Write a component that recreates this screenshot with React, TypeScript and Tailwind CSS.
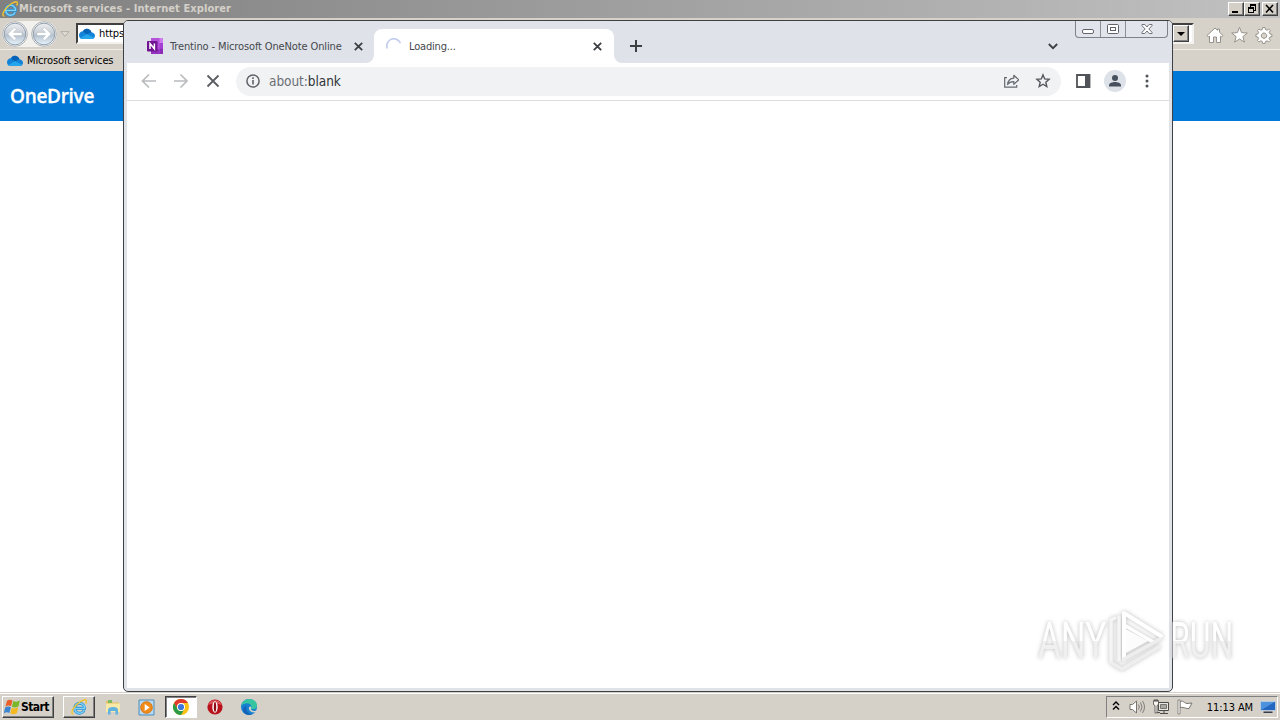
import type { ReactNode } from "react";

const ui = "font-['DejaVu_Sans_Condensed','DejaVu_Sans',sans-serif]";

function Cloud({ className }: { className?: string }) {
  return (
    <svg viewBox="0 0 16 11" className={className}>
      <path d="M4 3.200C5 .9 8 .1 10.200 1.400 11.600 2.200 12.200 3.300 12.500 4.300 14.600 4.500 16 6 16 7.700 16 9.600 14.600 11 12.800 11H3.500C1.500 11 0 9.500 0 7.200 0 5.100 1.700 3.300 4 3.200Z" fill="#1283d8" />
      <path d="M4 3.200C5 .9 8 .1 10.200 1.400 11.600 2.200 12.200 3.300 12.500 4.300L7.500 6.300Z" fill="#0762b5" />
      <path d="M1.200 10 8 6.300 15.300 9.800C14.700 10.600 13.800 11 12.800 11H3.500C2.600 11 1.800 10.600 1.200 10Z" fill="#25a5ec" />
    </svg>
  );
}

function IELogo({ className }: { className?: string }) {
  return (
    <svg viewBox="0 0 16 16" className={className} fill="none">
      <path d="M13.200 11.200A5 5 0 1 1 13.600 9.300H4.500" stroke="#2d93d6" strokeWidth="2.900" />
      <path d="M13.200 11.200A5 5 0 1 1 13.600 9.300H4.500" stroke="#7fd3f7" strokeWidth="1.300" />
      <path d="M2.300 15C-.3 15 .8 10.500 5 6.200 9.200 2 14 -.2 15.200 1.300 15.700 2 15.400 3.300 14.600 4.600" stroke="#f2c22c" strokeWidth="1.400" />
    </svg>
  );
}

function NavOrb({ flip }: { flip?: boolean }) {
  return (
    <svg viewBox="0 0 26 26" className={flip ? "h-[26px] w-[26px] -scale-x-100" : "h-[26px] w-[26px]"}>
      <defs>
        <linearGradient id="orb" x1="0" y1="0" x2="0" y2="1">
          <stop offset="0" stopColor="#eef0f2" />
          <stop offset=".45" stopColor="#c9cfd6" />
          <stop offset=".55" stopColor="#b4c1ce" />
          <stop offset="1" stopColor="#e8f4fc" />
        </linearGradient>
      </defs>
      <circle cx="13" cy="13" r="12.300" fill="#f8f9f9" stroke="#9b9ea2" strokeWidth=".8" />
      <circle cx="13" cy="13" r="10.800" fill="url(#orb)" stroke="#8796a6" strokeWidth=".9" />
      <path d="M12.300 6.500 5.800 13l6.500 6.500 2-2-2.800-2.900H20v-3.200h-8.500l2.800-2.900Z" fill="#fff" stroke="#a3aeb9" strokeWidth=".4" />
    </svg>
  );
}

function ClassicButton({ children }: { children: ReactNode }) {
  return (
    <div className="flex h-[14px] w-4 items-center justify-center border border-t-white border-r-[#404040] border-b-[#404040] border-l-white bg-[#d4d0c8] shadow-[inset_-1px_-1px_0_#808080]">
      {children}
    </div>
  );
}

function TitleBar() {
  return (
    <header className="flex h-[18px] shrink-0 items-center justify-between bg-linear-to-r from-[#808080] to-[#c1c1c1] pl-[2px] pr-[2px]">
      <div className="flex items-center">
        <IELogo className="h-4 w-4" />
        <span className="ml-[1px] whitespace-nowrap font-['DejaVu_Sans_Condensed','DejaVu_Sans',sans-serif] text-[11px] leading-[16px] font-bold tracking-[0.090px] text-[#d4d0c8]">
          Microsoft services - Internet Explorer
        </span>
      </div>
      <div className="flex">
        <ClassicButton>
          <svg viewBox="0 0 12 10" className="h-[10px] w-3"><path d="M2 7h6v2H2z" /></svg>
        </ClassicButton>
        <ClassicButton>
          <svg viewBox="0 0 12 10" className="h-[10px] w-3" fill="none" stroke="#000" shapeRendering="crispEdges">
            <path d="M4 .5h6M4 1.500h6M4.500 1v2.500M9.500 1v5.500M8 6h2M2 3.500h6M2 4.500h6M2.500 4v5M7.500 4v5M2 8.500h6" />
          </svg>
        </ClassicButton>
        <div className="w-[2px]" />
        <ClassicButton>
          <svg viewBox="0 0 12 10" className="h-[10px] w-3"><path d="m2 1 7 7.500M9 1 2 8.500" stroke="#000" strokeWidth="1.600" /></svg>
        </ClassicButton>
      </div>
    </header>
  );
}

function Navigation() {
  return (
    <div className="flex h-[31px] shrink-0 items-center bg-[#d6d1c9] pl-[2px]">
      <div className="flex h-[26px] items-center gap-[3px] rounded-full bg-[#f2f1ee]">
        <NavOrb />
        <NavOrb flip />
      </div>
      <svg viewBox="0 0 10 6" className="ml-[3px] h-[6px] w-[10px]"><path d="M.8.600h8.400L5 5.300Z" fill="#dedbd4" stroke="#b3afa7" /></svg>
      <div className="ml-[6px] flex h-[21px] w-[1118px] items-center border-2 border-t-[#404040] border-r-[#f4f2ee] border-b-[#f4f2ee] border-l-[#404040] bg-white pl-[1px]">
        <Cloud className="h-[11px] w-4" />
        <span className={`${ui} ml-[4px] text-[11px] leading-none tracking-[-0.1px] text-black`}>https</span>
        <span className="ml-auto mr-[3px] flex h-[17px] w-4 items-center justify-center border border-t-white border-r-[#404040] border-b-[#404040] border-l-white bg-[#d4d0c8] shadow-[inset_-1px_-1px_0_#808080]">
          <svg viewBox="0 0 8 4" className="h-[4px] w-[8px]"><path d="M0 0h8L4 4Z" /></svg>
        </span>
      </div>
      <svg viewBox="0 0 70 20" className="ml-[12px] mt-[2px] h-5 w-[70px]" fill="#fff" stroke="#96928b" strokeWidth="1" strokeLinejoin="round">
        <path d="M1 10.500 9 3l2.500 2.300V4h2v3.300l3.500 3.200L15.500 12l-1-.8V17.500h-4v-5.500H7.500v5.500h-4v-6.300l-1 .8Z" />
        <path d="m33.500 2.300 2.100 5.300 5.700.4-4.400 3.600 1.500 5.500-4.900-3.100-4.900 3.100 1.500-5.500L25.700 8l5.700-.4Z" />
        <path fillRule="evenodd" d="m57 2.500 2 .1.500 1.900 1.500.7 1.800-1.100 1.500 1.500-1.100 1.800.7 1.500 2 .5v2.200l-2 .5-.7 1.500 1.100 1.800-1.500 1.500-1.800-1.100-1.500.7-.5 2h-2.200l-.5-2-1.500-.7-1.800 1.100-1.500-1.500 1.100-1.800-.7-1.500-2-.5V9.400l2-.5.7-1.500-1.100-1.800 1.500-1.500 1.800 1.100 1.500-.7.5-2ZM58 8a2.700 2.700 0 1 0 .01 0Z" />
      </svg>
    </div>
  );
}

function WindowControls() {
  return (
    <div className="mr-px flex h-[17px] rounded-b-[4px] border border-t-0 border-[#7d828b] bg-[#e1e5eb]">
      <span className="flex w-[25px] items-center justify-center border-r border-[#8a8f98]">
        <svg viewBox="0 0 12 5" className="mt-[4px] h-[5px] w-3"><rect x=".5" y=".5" width="11" height="4" rx="1.500" fill="#fff" stroke="#60636b" /></svg>
      </span>
      <span className="flex w-[25px] items-center justify-center border-r border-[#8a8f98]">
        <svg viewBox="0 0 12 10" className="h-[10px] w-3" fill="#fff" stroke="#60636b"><rect x=".5" y=".5" width="11" height="9" rx="1" /><rect x="3.500" y="3.500" width="5" height="3" /></svg>
      </span>
      <span className="flex w-[41px] items-center justify-center">
        <svg viewBox="0 0 12 10" className="h-[10px] w-3"><path d="M1 .5h2.800L6 3 8.200.5H11v1.200L7.800 5 11 8.300v1.200H8.200L6 7 3.800 9.500H1V8.300L4.200 5 1 1.700Z" fill="#fff" stroke="#60636b" strokeWidth=".9" /></svg>
      </span>
    </div>
  );
}

function TabClose() {
  return <svg viewBox="0 0 9 9" className="h-[9px] w-[9px]"><path d="m.8.8 7.400 7.400M8.200.8.8 8.200" stroke="#3c4043" strokeWidth="1.800" /></svg>;
}

function TabStrip() {
  return (
    <div className="flex h-[42px] items-end">
      <div className="flex h-[34px] w-[239px] items-center pl-[20px]">
        <svg viewBox="0 0 16 16" className="h-4 w-4">
          <path d="M4 0h11.200q.8 0 .8.8V16H4Z" fill="#b552dc" />
          <path d="M12.500 0H16v5h-3.500Z" fill="#cf7bee" /><path d="M12.500 5H16v5.500h-3.500Z" fill="#a63ed4" /><path d="M12.500 10.500H16V16h-3.500Z" fill="#8f2bb9" />
          <path d="M4 11h8.500v5H4Z" fill="#9332bf" />
          <rect y="3" width="10.500" height="10.500" rx=".8" fill="#711491" />
          <path d="M3 11V5.500l4.400 5.300V5.500" fill="none" stroke="#fff" strokeWidth="1.500" />
        </svg>
        <span className={`${ui} ml-[7px] whitespace-nowrap text-[11px] leading-none tracking-[-0.130px] text-[#45484d]`}>Trentino - Microsoft OneNote Online</span>
        <span className="ml-auto mr-[3px]"><TabClose /></span>
      </div>
      <svg viewBox="0 0 8 8" className="h-2 w-2"><path d="M8 0v8H0a8 8 0 0 0 8-8Z" fill="#fff" /></svg>
      <div className="flex h-[34px] w-[240px] items-center rounded-t-[8px] bg-white pl-[12px] pr-[12px]">
        <svg viewBox="0 0 16 16" className="h-4 w-4"><path d="M1.300 10.500A7 7 0 0 1 14.400 5.200" fill="none" stroke="#c3cdf0" strokeWidth="1.700" /></svg>
        <span className={`${ui} ml-[7px] text-[11px] leading-none tracking-[-0.170px] text-[#45484d]`}>Loading...</span>
        <span className="ml-auto"><TabClose /></span>
      </div>
      <svg viewBox="0 0 8 8" className="h-2 w-2"><path d="M0 0v8h8a8 8 0 0 1-8-8Z" fill="#fff" /></svg>
      <svg viewBox="0 0 12 12" className="mb-[11px] ml-[8px] h-3 w-3"><path d="M6 0v12M0 6h12" stroke="#3c4043" strokeWidth="2" /></svg>
      <div className="ml-auto flex h-[42px]">
        <svg viewBox="0 0 10 7" className="mr-[17px] mt-[22px] h-[7px] w-[10px]"><path d="m.8 1 4.200 4.200L9.200 1" fill="none" stroke="#3c4043" strokeWidth="1.800" /></svg>
        <WindowControls />
      </div>
    </div>
  );
}

function AddressRow() {
  return (
    <div className="flex h-[38px] shrink-0 items-center border-b border-[#dadce0] bg-white pl-[13px]">
      <svg viewBox="0 0 80 16" className="mb-[2px] h-4 w-20" fill="none" strokeWidth="1.700">
        <path d="M16 8H3M9 1.500 2.500 8 9 14.500" stroke="#b9bbbe" />
        <path d="M34 8h13M40.500 1.500 47 8l-6.500 6.500" stroke="#b9bbbe" />
        <path d="m67.500 2.500 11 11M78.500 2.500l-11 11" stroke="#5a5d61" strokeWidth="1.800" />
      </svg>
      <div className="ml-[16px] flex h-[29px] w-[825px] items-center rounded-full bg-[#f0f2f4] pl-[10px] pr-[10px]">
        <svg viewBox="0 0 14 14" className="mb-px h-[14px] w-[14px]"><circle cx="7" cy="7" r="6.100" fill="none" stroke="#5f6368" strokeWidth="1.500" /><path d="M6.200 6h1.600v4.500H6.200zM6.200 3.300h1.600v1.600H6.200z" fill="#5f6368" /></svg>
        <span className="ml-[9px] font-['DejaVu_Sans_Condensed','DejaVu_Sans',sans-serif] text-[13.500px] leading-none tracking-[-0.050px] text-[#6a6e73]">about:<span className="text-[#303236]">blank</span></span>
        <svg viewBox="0 0 16 16" className="ml-auto mb-[2px] h-4 w-4" fill="none" stroke="#65696e" strokeWidth="1.200">
          <path d="M4 4.600H1.700v9.500h12V12" />
          <path d="M4.600 11.500C5 7.500 7 5.500 10.800 5.200V2.300L15.800 6.800l-5 4.500V8.700C8 8.600 6 9.500 4.600 11.500Z" strokeLinejoin="round" />
        </svg>
        <svg viewBox="0 0 16 16" className="ml-[16px] mb-px h-4 w-4"><path d="m8 1.900 1.700 4 4.400.4-3.300 2.900 1 4.300L8 11.200l-3.800 2.300 1-4.300L1.900 6.300l4.400-.4Z" fill="none" stroke="#53575b" strokeWidth="1.400" /></svg>
      </div>
      <svg viewBox="0 0 15 14" className="mb-[2px] ml-[15px] h-[14px] w-[15px]"><path d="M1 1h12.500v12H1z" fill="none" stroke="#505357" strokeWidth="1.800" /><path d="M9 1h5v12H9z" fill="#505357" /></svg>
      <svg viewBox="0 0 22 22" className="mb-[1px] ml-[13px] h-[22px] w-[22px]"><circle cx="11" cy="11" r="11" fill="#dde1e8" /><circle cx="11" cy="8" r="3" fill="#47515d" /><path d="M5 16.500v-1.300C5 13 8.500 12 11 12s6 1 6 3.200v1.300Z" fill="#47515d" /></svg>
      <svg viewBox="0 0 4 14" className="mb-px ml-[19px] h-[14px] w-1" fill="#505357"><circle cx="2" cy="2" r="1.500" /><circle cx="2" cy="7" r="1.500" /><circle cx="2" cy="12" r="1.500" /></svg>
    </div>
  );
}

function ChromeWindow() {
  return (
    <section className="absolute top-[20px] left-[123px] flex h-[672px] w-[1050px] flex-col rounded-[5px] border border-[#3e4045] bg-[#e0e3e8] px-[3px] pb-[3px]">
      <div className="-mx-[3px] overflow-hidden rounded-t-[4px] bg-[#dfe2e9] px-[3px]"><TabStrip /></div>
      <AddressRow />
      <main className="flex-1 bg-white" />
    </section>
  );
}

function Watermark() {
  return (
    <div className="absolute top-[607px] left-[1034px] flex h-[68px] w-[204px] items-center justify-between px-[4px] opacity-90 drop-shadow-[0_0_2px_#b4b4b4]">
      <div className="w-[64px]">
        <span className="inline-block origin-left scale-x-[.7] bg-linear-to-b from-[#fff] from-50% to-[#efefef] to-50% bg-clip-text font-['Roboto',sans-serif] text-[50px] leading-none font-normal whitespace-nowrap text-transparent">ANY</span>
      </div>
      <svg viewBox="0 0 58 62" className="absolute left-[73px] h-[62px] w-[58px]" fill="none" strokeLinejoin="round" strokeLinecap="round">
        <path d="M4 52V10l4-2M12 50V7" stroke="#f4f4f4" strokeWidth="3.500" />
        <path d="M17 49V3L54 26" stroke="#fff" strokeWidth="4" />
        <path d="M17 15 46 32" stroke="#fff" strokeWidth="3.500" />
        <path d="M17 49 53 29M5 53l10 6 37-22" stroke="#ededed" strokeWidth="3.500" />
        <path d="M19 19v24l22-12Z" fill="#fcfcfc" />
      </svg>
      <div className="w-[64px]">
        <span className="inline-block origin-left scale-x-[.64] bg-linear-to-b from-[#fff] from-50% to-[#efefef] to-50% bg-clip-text font-['Roboto',sans-serif] text-[50px] leading-none font-normal whitespace-nowrap text-transparent">RUN</span>
      </div>
    </div>
  );
}

function Taskbar() {
  return (
    <footer className="flex h-[28px] shrink-0 items-center border-t border-[#d4d0c8] bg-[#d5d1c9] pl-[2px] pr-[2px] shadow-[inset_0_1px_0_#fff]">
      <div className="mt-[1px] flex h-[22px] w-[52px] items-center border border-t-white border-r-[#404040] border-b-[#404040] border-l-white pl-[1px] shadow-[inset_-1px_-1px_0_#808080]">
        <svg viewBox="0 0 16 16" className="h-4 w-4">
          <path d="M3 1.800C5 .2 7 .6 8.500 1.600L7.100 7.300C5.400 6.300 3.400 6.300 1.400 7.700Z" fill="#e9602a" />
          <path d="M9.300 2c2 1.100 4.200 1 6.600-.4l-1.400 5.700c-2.200 1.500-4.500 1.600-6.600.5Z" fill="#79b829" />
          <path d="M1.200 8.500C3.200 7.200 5.200 7.200 6.900 8.200L5.400 14C3.700 12.800 1.700 12.900-.2 14.300Z" fill="#3b85d1" />
          <path d="M7.700 8.700c2 1.100 4.300 1 6.600-.4l-1.400 5.700c-2.200 1.500-4.500 1.500-6.600.4Z" fill="#f5b91f" />
        </svg>
        <span className="ml-px font-['DejaVu_Sans_Condensed','DejaVu_Sans',sans-serif] text-[12px] leading-none font-bold tracking-[-0.550px] text-black">Start</span>
      </div>
      <div className="mt-[1px] ml-[9px] flex h-[22px] w-[32px] items-center justify-center border border-t-white border-r-[#404040] border-b-[#404040] border-l-white shadow-[inset_-1px_-1px_0_#808080]">
        <IELogo className="h-4 w-4" />
      </div>
      <svg viewBox="0 0 16 16" className="mt-[1px] ml-[10px] h-4 w-4">
        <path d="M1 2h5l1.500 1.500H14V13H1Z" fill="#e5c15f" /><path d="M3 1h4v3H3z" fill="#7dbb60" /><path d="M1 4.500h14V13H1Z" fill="#f9e9a9" />
        <path d="M3 15.500V11Q3 8 8 8t5 3v4.500h-2.600V12H5.600v3.500Z" fill="#62b2df" />
      </svg>
      <svg viewBox="0 0 17 17" className="mt-[1px] ml-[17px] h-[17px] w-[17px]">
        <path d="M1 1h15v15H1z" fill="#b8d9f0" stroke="#4b8dbd" /><circle cx="8.500" cy="8.500" r="5.800" fill="#f18b19" stroke="#d67913" /><path d="M6.700 5v7l5-3.500Z" fill="#fff" />
      </svg>
      <div className="mt-[1px] ml-[10px] flex h-[22px] w-[32px] items-center justify-center border border-t-[#404040] border-r-white border-b-white border-l-[#404040] bg-white shadow-[inset_1px_1px_0_#808080]">
        <svg viewBox="0 0 16 16" className="h-4 w-4">
          <circle cx="8" cy="8" r="8" fill="#fbc116" /><path d="M1.070 4A8 8 0 0 1 14.930 4H8a4 4 0 0 0-3.460 6Z" fill="#df3a2d" />
          <path d="M1.070 4A8 8 0 0 0 8 16l3.460-6a4 4 0 0 1-6.920 0Z" fill="#2b9b4a" /><circle cx="8" cy="8" r="4" fill="#fff" /><circle cx="8" cy="8" r="3.100" fill="#3c78dc" />
        </svg>
      </div>
      <svg viewBox="0 0 16 16" className="mt-[1px] ml-[10px] h-4 w-4"><circle cx="8" cy="8" r="7.600" fill="#b8121c" /><path d="M1 6a7.500 7.500 0 0 1 14 0Q8 3 1 6Z" fill="#d95358" /><ellipse cx="8" cy="8" rx="2.700" ry="5.800" fill="#fff" /><ellipse cx="8" cy="8" rx="1.200" ry="4.900" fill="#8f0d16" /></svg>
      <svg viewBox="0 0 16 16" className="mt-[1px] ml-[18px] h-4 w-4">
        <circle cx="8" cy="8" r="8" fill="#1780d1" /><path d="M.3 6.500C1.500 2 5 0 8.500 0 13 0 16 3.300 16 6.500 16 9 14 10.300 12 10.300c-2.300 0-2.300-1-1.700-1.700C11 6 8.500 4.200 6 4.200c-2.300 0-4.500 1-5.700 2.300Z" fill="#36c5a1" />
        <path d="M5.500 7.500C4 11 7 15 11 15 8 17.300 3 15.500 2.200 11.500 1.800 9 3.500 7 5.500 7.500Z" fill="#1461b5" /><path d="M10.300 8.600C8.500 11 12.500 13 16 11.300L14.800 13C10.500 14.500 7 11.500 8 8.200 9 6.800 10.500 7.500 10.300 8.600Z" fill="#d5d1c9" />
      </svg>
      <div className="mt-[1px] ml-auto flex h-[22px] w-[172px] items-center border border-t-[#808080] border-r-white border-b-white border-l-[#808080] pl-[5px] pr-[1px]">
        <svg viewBox="0 0 8 10" className="mb-[3px] h-[10px] w-2" fill="none" stroke="#000" strokeWidth="1.400"><path d="m1 4 3-3 3 3M1 8.500l3-3 3 3" /></svg>
        <svg viewBox="0 0 16 16" className="ml-[9px] h-4 w-4" fill="none" stroke="#77756f"><path d="M1 5.500h2.500L7.500 2v12l-4-3.500H1Z" fill="#fff" /><path d="M9.500 5.500q1.700 2.500 0 5M11.500 3.500q3 4.500 0 9M13.500 2q4 6 0 12" strokeWidth=".9" /></svg>
        <svg viewBox="0 0 16 16" className="ml-[8px] h-4 w-4" stroke="#4d4c48"><path d="M5.500 3.500h10v8h-10z" fill="#e9e8e4" /><path d="M7.500 5.500h6v4h-6z" fill="#aaa8a2" stroke="#77756f" /><path d="M7 14.500h8M11 11.500v3" /><path d="M.5 1.500h5v4l-1.500 1v7h3l-5 .5v-7.500l-1.500-1Z" fill="#f7f6f3" strokeWidth=".8" /><path d="M2 0v3M4 0v3" /></svg>
        <svg viewBox="0 0 16 16" className="ml-[8px] h-4 w-4"><path d="M3 2.500c3-1.500 4 1.500 7 2l5-.5-3 5.500c-3 .5-4-1.500-9-1Z" fill="#fff" stroke="#77756f" /><path d="M1 1h2v14H1Z" fill="#fff" stroke="#77756f" strokeWidth=".8" /></svg>
        <span className={`${ui} ml-auto whitespace-nowrap text-[11px] leading-none tracking-[-0.1px] text-black`}>11:13 AM</span>
        <svg viewBox="0 0 16 14" className="ml-[7px] h-[14px] w-4"><path d="M.5 1.500h15v9H.500z" fill="#2467c1" stroke="#dce7f2" strokeWidth=".6" /><path d="M1 2h13.500L3 9l-2 1Z" fill="#4e91dc" /><path d="M3.500 11.500h9V13h-9Z" fill="#343c48" /></svg>
      </div>
    </footer>
  );
}

export default function App() {
  return (
    <div className="relative flex h-[720px] w-[1280px] flex-col overflow-hidden bg-white">
      <TitleBar />
      <Navigation />
      <div className="flex h-[22px] shrink-0 items-center border-t border-[#efede8] bg-[#d6d1c9] pl-[7px]">
        <Cloud className="h-[11px] w-4" />
        <span className={`${ui} ml-[4px] whitespace-nowrap text-[11px] leading-none tracking-[-0.130px] text-black`}>Microsoft services</span>
      </div>
      <div className="flex h-[50px] shrink-0 items-center bg-[#0078d7] pl-[10px]">
        <span className="mt-px font-['Open_Sans','Noto_Sans',sans-serif] text-[19px] leading-none font-semibold tracking-[-0.300px] text-white [-webkit-text-stroke:0.3px_white]">OneDrive</span>
      </div>
      <div className="flex-1 bg-white" />
      <Taskbar />
      <ChromeWindow />
      <Watermark />
    </div>
  );
}
